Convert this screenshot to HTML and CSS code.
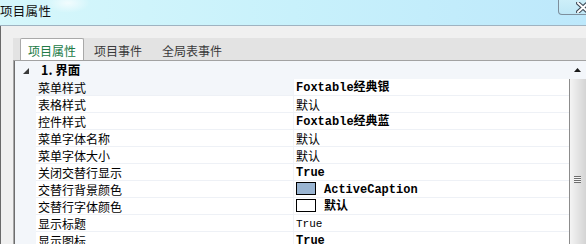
FILE: index.html
```html
<!DOCTYPE html>
<html>
<head>
  <title>项目属性</title>
  <link rel="stylesheet" href="styles.css">
</head>
<body>

  <div class="titlebar">
    <span class="title">项目属性</span>
    <div class="close-btn">
      <svg width="14" height="11" viewBox="0 0 14 11">
        <path d="M2 1 L12 10 M12 1 L2 10" stroke="#3d4a57" stroke-width="4" stroke-linecap="square"/>
        <path d="M2 1 L12 10 M12 1 L2 10" stroke="#ffffff" stroke-width="2" stroke-linecap="square"/>
      </svg>
    </div>
  </div>

  <div class="frame">
    <div class="panel">
      <div class="tabs">
        <div class="tab active">项目属性</div>
        <div class="tab">项目事件</div>
        <div class="tab">全局表事件</div>
      </div>

      <div class="grid">
        <div class="grid-body">
          <div class="category">
            <svg class="toggle" width="6" height="6" viewBox="0 0 6 6">
              <polygon points="6,0 6,6 0,6" fill="#3a3a3a"/>
            </svg>
            1. 界面
          </div>
          <div class="row selected">
            <div class="name">菜单样式</div>
            <div class="value bold">Foxtable经典银</div>
          </div>
          <div class="row">
            <div class="name">表格样式</div>
            <div class="value">默认</div>
          </div>
          <div class="row">
            <div class="name">控件样式</div>
            <div class="value bold">Foxtable经典蓝</div>
          </div>
          <div class="row">
            <div class="name">菜单字体名称</div>
            <div class="value">默认</div>
          </div>
          <div class="row">
            <div class="name">菜单字体大小</div>
            <div class="value">默认</div>
          </div>
          <div class="row">
            <div class="name">关闭交替行显示</div>
            <div class="value bold">True</div>
          </div>
          <div class="row">
            <div class="name">交替行背景颜色</div>
            <div class="value bold"><span class="swatch caption"></span>ActiveCaption</div>
          </div>
          <div class="row">
            <div class="name">交替行字体颜色</div>
            <div class="value bold"><span class="swatch"></span>默认</div>
          </div>
          <div class="row">
            <div class="name">显示标题</div>
            <div class="value latin">True</div>
          </div>
          <div class="row">
            <div class="name">显示图标</div>
            <div class="value bold">True</div>
          </div>
        </div>

        <div class="scrollbar">
          <div class="scroll-up">
            <svg width="7" height="4" viewBox="0 0 7 4">
              <polygon points="3.5,0 7,4 0,4" fill="#1a1a1a"/>
            </svg>
          </div>
          <div class="thumb">
            <div class="grip"></div>
          </div>
        </div>
      </div>
    </div>
  </div>

</body>
</html>
```

FILE: styles.css
```css
html, body {
  margin: 0;
  width: 586px;
  height: 244px;
  overflow: hidden;
  background: #f0f0f0;
  font-family: 'Noto Sans CJK SC', sans-serif;
  font-size: 12px;
  color: #000;
}

.titlebar {
  height: 25px;
  border-bottom: 1px solid #9fb3c1;
  display: flex;
  align-items: flex-start;
  background:
    radial-gradient(ellipse 22px 10px at 68px 3px, rgba(255, 255, 255, 0.7), rgba(255, 255, 255, 0)),
    linear-gradient(to right, #d6f7fb, #c8f1fb 50%, #bde8fb);
}

.title {
  font-size: 12.5px;
  line-height: 22px;
  letter-spacing: 0.3px;
  color: #111;
}

.close-btn {
  margin-left: auto;
  margin-right: -14px;
  width: 42px;
  height: 15px;
  border: 1px solid #7d8e9c;
  border-top: none;
  border-radius: 0 0 0 4px;
  display: flex;
  align-items: center;
  padding-left: 17px;
  box-sizing: border-box;
  background: linear-gradient(#cdeff9, #bfe7f6);
}

.frame {
  height: 218px;
  border-left: 1px solid #6a6a6a;
  padding: 12px 0 0 12px;
  box-sizing: border-box;
}

.panel {
  background: #e3e3e3;
  height: 100%;
  display: flex;
  flex-direction: column;
}

.tabs {
  height: 25px;
  display: flex;
  align-items: flex-end;
  padding-left: 7px;
}

.tab {
  height: 21px;
  line-height: 23px;
  padding: 0 9px;
  border: 1px solid transparent;
  border-bottom: none;
  color: #3a3a3a;
}

.tab.active {
  padding: 0 7px;
  background: #fff;
  border-color: #a9a9a9;
  border-radius: 2px 2px 0 0;
  color: #217a45;
}

.grid {
  flex: 1;
  display: flex;
  border-top: 1px solid #a2a2a2;
  border-left: 1px solid #a7a7a7;
}

.grid-body {
  flex: 1;
  background: #f3f6fa;
  border-left: 1px solid #6e6e6e;
}

.category {
  height: 18px;
  line-height: 20px;
  display: flex;
  align-items: center;
  font-weight: bold;
  font-size: 12.5px;
}

.toggle {
  margin: 2px 12px 0 8px;
}

.row {
  display: flex;
  height: 16px;
  margin-left: 21px;
  border-bottom: 1px solid #eef1f6;
  background: #fff;
}

.name {
  width: 255px;
  padding: 2px 0 0 2px;
  line-height: 14px;
  border-right: 1px solid #f1f3f7;
}

.row.selected .name {
  background: #f3f6fa;
}

.value {
  flex: 1;
  padding: 2px 0 0 2px;
  line-height: 14px;
  display: flex;
  align-items: flex-start;
}

.value.bold {
  font-family: 'Liberation Mono', 'Noto Sans CJK SC', monospace;
  font-weight: bold;
  font-size: 12px;
}

.value.latin {
  font-family: 'Liberation Mono', monospace;
  font-size: 11px;
}

.swatch {
  width: 18px;
  height: 11px;
  margin-top: -1px;
  border: 1px solid #000;
  background: #fff;
  margin-right: 8px;
}

.swatch.caption {
  background: #99b4d1;
}

.scrollbar {
  width: 17px;
  flex-shrink: 0;
  display: flex;
  flex-direction: column;
  background: #f0f0f0;
}

.scroll-up {
  height: 18px;
  display: flex;
  align-items: center;
  padding-left: 5px;
  background: #f3f6fa;
}

.thumb {
  flex: 1;
  border-left: 1px solid #8c8c8c;
  background: linear-gradient(to right, #f4f4f4, #e4e4e4 50%, #d4d4d4);
  display: flex;
  justify-content: flex-start;
  padding-top: 97px;
  padding-left: 4px;
}

.grip {
  width: 7px;
  height: 7px;
  background: repeating-linear-gradient(#6e6e6e 0 1px, #f6f6f6 1px 2px);
}
```
